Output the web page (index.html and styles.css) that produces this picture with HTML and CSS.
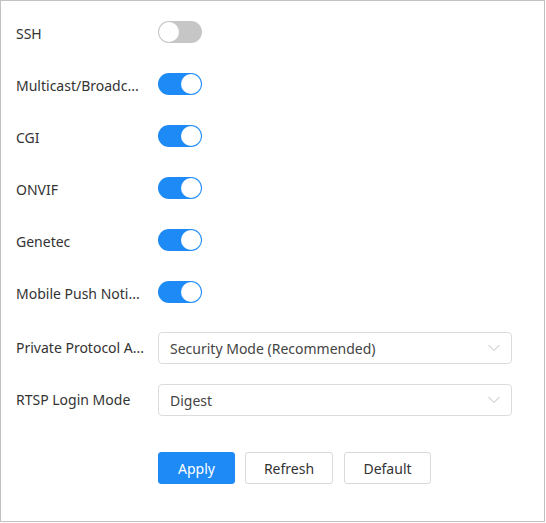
FILE: index.html
```html
<!DOCTYPE html>
<html>
<head>
<meta charset="utf-8">
<link rel="stylesheet" href="styles.css">
</head>
<body>
<div class="panel">
  <div class="row sw-row"><span class="label">SSH</span><span class="switch"></span></div>
  <div class="row sw-row"><span class="label">Multicast/Broadc...</span><span class="switch on"></span></div>
  <div class="row sw-row"><span class="label">CGI</span><span class="switch on"></span></div>
  <div class="row sw-row"><span class="label">ONVIF</span><span class="switch on"></span></div>
  <div class="row sw-row"><span class="label">Genetec</span><span class="switch on"></span></div>
  <div class="row sw-row last"><span class="label">Mobile Push Noti...</span><span class="switch on"></span></div>
  <div class="row"><span class="label">Private Protocol A...</span>
    <div class="select"><span>Security Mode (Recommended)</span>
      <svg class="chev" width="12" height="8" viewBox="0 0 12 8"><polyline points="0.5,1 6,6.5 11.5,1" fill="none" stroke="#bdbdbd" stroke-width="1"/></svg>
    </div>
  </div>
  <div class="row"><span class="label">RTSP Login Mode</span>
    <div class="select"><span>Digest</span>
      <svg class="chev" width="12" height="8" viewBox="0 0 12 8"><polyline points="0.5,1 6,6.5 11.5,1" fill="none" stroke="#bdbdbd" stroke-width="1"/></svg>
    </div>
  </div>
  <div class="buttons">
    <button class="btn primary">Apply</button>
    <button class="btn">Refresh</button>
    <button class="btn default">Default</button>
  </div>
</div>
</body>
</html>
```
FILE: styles.css
```css
html, body { margin: 0; padding: 0; background: #fff; }
body { font-family: "Noto Sans", "Open Sans", Arial, sans-serif; font-size: 14px; color: #333; }
.panel {
  box-sizing: border-box;
  width: 545px;
  height: 522px;
  border: 1px solid #c2c2c2;
  padding: 17px 0 0 15px;
}
.row { display: flex; height: 32px; margin-bottom: 20px; }
.row.last { margin-bottom: 22px; }
.label {
  width: 142px;
  flex: none;
  line-height: 32px;
  white-space: nowrap;
  overflow: hidden;
}
.switch {
  position: relative;
  margin-top: 3px;
  width: 44px;
  height: 22px;
  border-radius: 11px;
  background: #c6c6c6;
  box-sizing: border-box;
}
.switch::after {
  content: "";
  position: absolute;
  top: 1px;
  left: 1px;
  width: 20px;
  height: 20px;
  border-radius: 50%;
  background: #fff;
}
.switch.on { background: #1e8af6; }
.switch.on::after { left: 23px; }
.select {
  box-sizing: border-box;
  width: 354px;
  height: 32px;
  border: 1px solid #dcdcdc;
  border-radius: 4px;
  padding: 0 11px;
  display: flex;
  align-items: center;
  justify-content: space-between;
  color: #444;
}
.buttons {
  display: flex;
  gap: 10px;
  margin-top: 36px;
  padding-left: 142px;
}
.btn {
  box-sizing: border-box;
  height: 32px;
  border: 1px solid #d9d9d9;
  border-radius: 3px;
  background: #fff;
  color: #333;
  font-family: inherit;
  font-size: 14px;
  padding: 0;
  width: 88px;
}
.btn.primary { background: #1e8af6; border-color: #1e8af6; color: #fff; width: 77px; }
.btn.default { width: 87px; margin-left: 1px; }
```
